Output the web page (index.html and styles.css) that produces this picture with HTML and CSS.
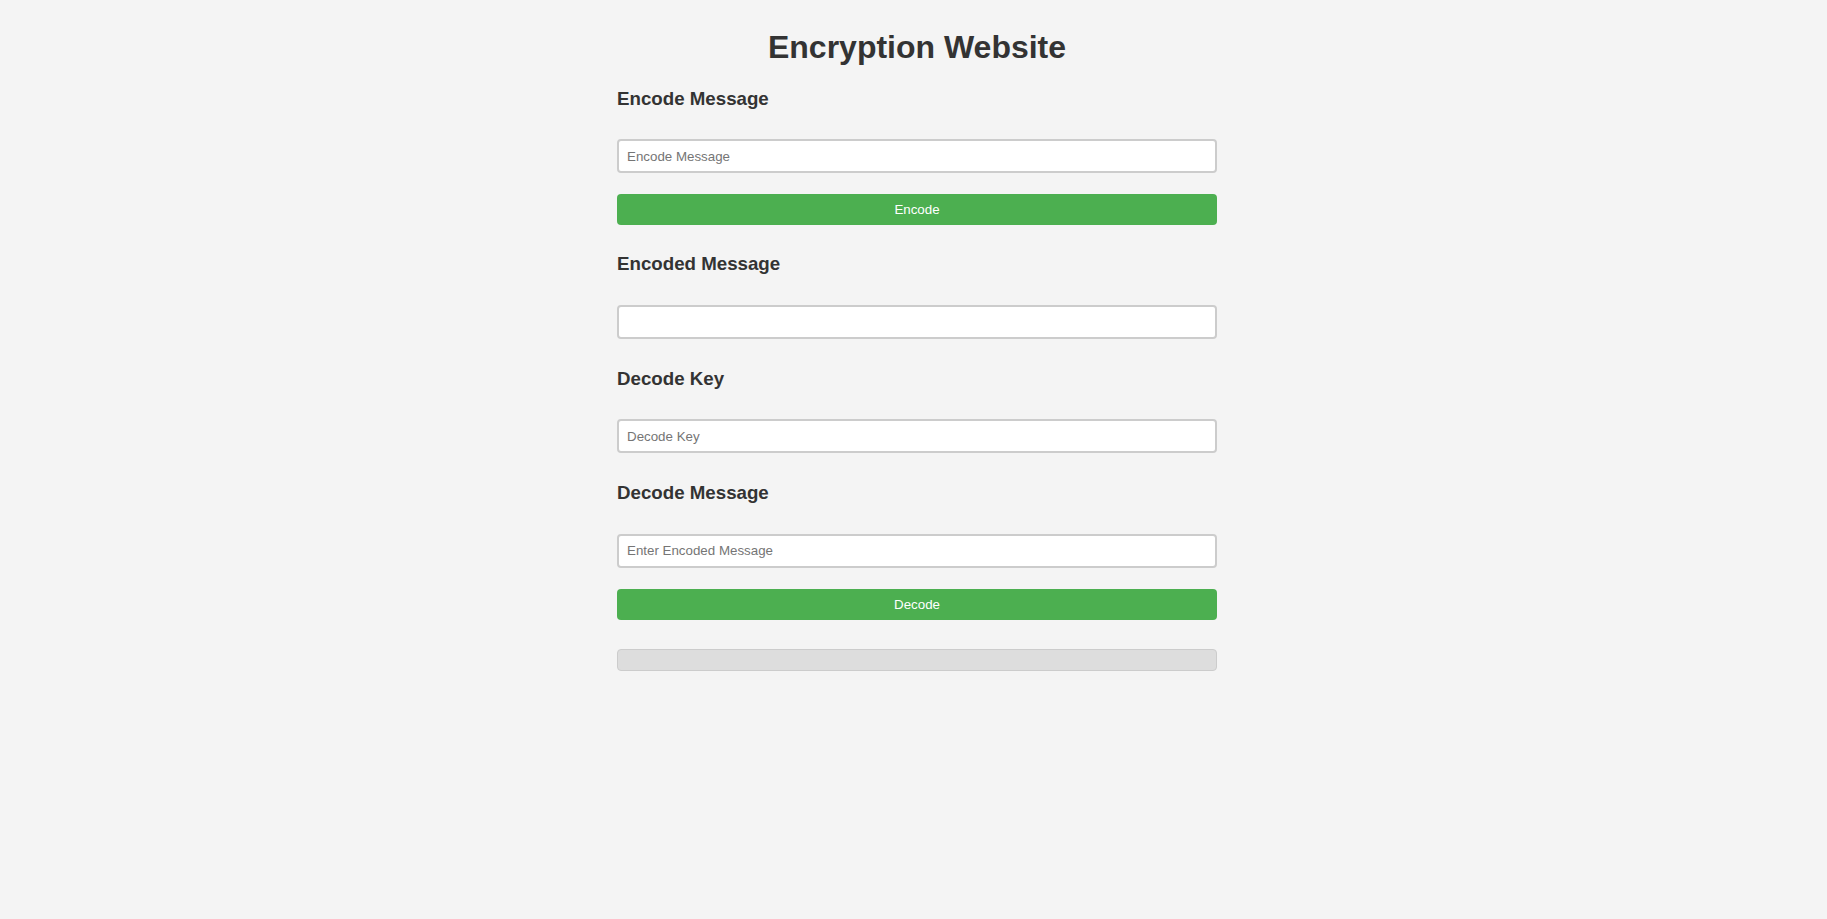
FILE: index.html
```html
<!DOCTYPE html>
<html lang="en">
<head>
<meta charset="utf-8">
<title>Encryption Website</title>
<link rel="stylesheet" href="styles.css">
</head>
<body>
<h1 class="page-title">Encryption Website</h1>
<div class="container">
  <h3 class="section-title first">Encode Message</h3>
  <input class="field" type="text" placeholder="Encode Message">
  <button class="btn" type="button">Encode</button>

  <h3 class="section-title">Encoded Message</h3>
  <input class="field" type="text" readonly>

  <h3 class="section-title">Decode Key</h3>
  <input class="field" type="text" placeholder="Decode Key">

  <h3 class="section-title">Decode Message</h3>
  <input class="field" type="text" placeholder="Enter Encoded Message">
  <button class="btn" type="button">Decode</button>

  <div class="output"></div>
</div>
</body>
</html>
```

FILE: styles.css
```css
html {
  background: #f4f4f4;
}

body {
  margin: 8px 1px 8px 8px;
  font-family: "Liberation Sans", Arial, sans-serif;
  color: #333;
  background: #f4f4f4;
}

.page-title {
  margin: 21.44px 0;
  font-size: 32px;
  line-height: 36.8px;
  font-weight: bold;
  text-align: center;
  color: #333;
}

.container {
  width: 600px;
  margin: 0 auto;
  display: flex;
  flex-direction: column;
}

.section-title {
  margin: 18.72px 0;
  font-size: 18.72px;
  line-height: 21.5px;
  font-weight: bold;
  color: #333;
}

.section-title.first {
  margin-top: 0;
}

.field {
  box-sizing: border-box;
  display: block;
  width: 100%;
  height: 34px;
  margin: 11.5px 0 10px;
  padding: 0 8px;
  border: 2px solid #ccc;
  border-radius: 4px;
  background: #fff;
  font-family: "Liberation Sans", Arial, sans-serif;
  font-size: 13.333px;
  color: #333;
  outline: none;
}

.field::placeholder {
  color: #757575;
}

.btn {
  box-sizing: border-box;
  display: block;
  width: 100%;
  height: 31px;
  margin: 11px 0 9px;
  padding: 0;
  border: none;
  border-radius: 4px;
  background: #4caf50;
  color: #fff;
  font-family: "Liberation Sans", Arial, sans-serif;
  font-size: 13.333px;
  cursor: pointer;
}

.output {
  box-sizing: border-box;
  height: 22px;
  margin-top: 20px;
  border: 1px solid #ccc;
  border-radius: 4px;
  background: #ddd;
}
```
